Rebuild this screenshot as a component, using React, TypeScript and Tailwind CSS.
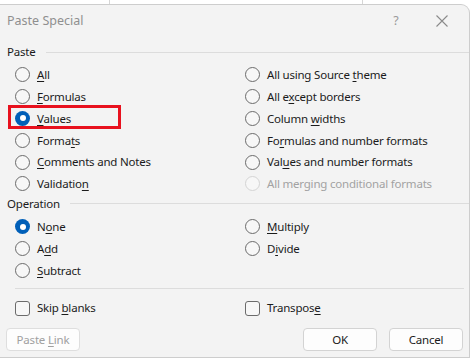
import React from "react";

type Opt = { label: string; key: number; checked?: boolean; disabled?: boolean };

// label with an access key underline at position `key`
function KeyLabel({ label, k }: { label: string; k: number }) {
    if (k < 0) return <span>{label}</span>;
    return (
        <span>
            {label.slice(0, k)}
            <span className="underline underline-offset-[2px] decoration-1">{label[k]}</span>
            {label.slice(k + 1)}
        </span>
    );
}

function Radio({ opt, boxed }: { opt: Opt; boxed?: boolean }) {
    return (
        <div className="relative flex items-center h-[21.8px] gap-[7px]">
            {opt.checked ? (
                <span className="w-[15px] h-[15px] rounded-full bg-[#005fb8] flex items-center justify-center shrink-0">
                    <span className="w-[6px] h-[6px] rounded-full bg-white" />
                </span>
            ) : (
                <span
                    className={`w-[15px] h-[15px] rounded-full border shrink-0 bg-[#f7f7f7] ${opt.disabled ? "border-[#d4d4d4]" : "border-[#6b6b6b]"}`}
                />
            )}
            <span className={opt.disabled ? "text-[#a2a2a2]" : "text-[#1b1b1b]"}>
                <KeyLabel label={opt.label} k={opt.key} />
            </span>
            {boxed && (
                <div className="absolute left-[-7px] top-[-3px] w-[113px] h-[24px] border-[3px] border-[#e8111e]" />
            )}
        </div>
    );
}

function Check({ label, k }: { label: string; k: number }) {
    return (
        <div className="flex items-center h-[21.8px] gap-[7px]">
            <span className="w-[15px] h-[15px] rounded-[3px] border border-[#6b6b6b] bg-[#f7f7f7] shrink-0" />
            <span className="text-[#1b1b1b]">
                <KeyLabel label={label} k={k} />
            </span>
        </div>
    );
}

function GroupLabel({ text }: { text: string }) {
    return (
        <div className="flex items-center h-[18px] pl-[7px] gap-[10px]">
            <span className="text-[#1b1b1b]">{text}</span>
            <div className="flex-1 h-px bg-[#dcdcdc]" />
        </div>
    );
}

const pasteLeft: Opt[] = [
    { label: "All", key: 0 },
    { label: "Formulas", key: 0 },
    { label: "Values", key: 0, checked: true },
    { label: "Formats", key: 5 },
    { label: "Comments and Notes", key: 0 },
    { label: "Validation", key: 9 },
];

const pasteRight: Opt[] = [
    { label: "All using Source theme", key: 17 },
    { label: "All except borders", key: 5 },
    { label: "Column widths", key: 7 },
    { label: "Formulas and number formats", key: 2 },
    { label: "Values and number formats", key: 3 },
    { label: "All merging conditional formats", key: -1, disabled: true },
];

const opLeft: Opt[] = [
    { label: "None", key: 1, checked: true },
    { label: "Add", key: 1 },
    { label: "Subtract", key: 0 },
];

const opRight: Opt[] = [
    { label: "Multiply", key: 0 },
    { label: "Divide", key: 1 },
];

export default function App() {
    return (
        <div
            className="w-[474px] h-[360px] bg-white overflow-hidden text-[11.5px] tracking-[-0.2px]"
            style={{ fontFamily: '"Noto Sans", "Open Sans", sans-serif' }}
        >
            {/* sheet grid peeking above */}
            <div className="h-[4px] flex">
                <div className="w-[110px] border-r border-[#d6d6d6]" />
                <div className="w-[253px] border-r border-[#d6d6d6]" />
            </div>
            <div className="w-[470px] h-[354px] bg-[#f3f3f3] border border-l-0 border-[#cdcdcd] rounded-tr-[9px] flex flex-col">
                {/* title bar */}
                <div className="h-[32px] flex items-center pl-[7px] text-[12.5px] tracking-normal text-[#8f8f8f]">
                    <span className="flex-1">Paste Special</span>
                    <span className="w-[20px] text-center mr-[29px] text-[#9a9a9a]">?</span>
                    <svg width="14" height="14" viewBox="0 0 14 14" className="mr-[20px]">
                        <path d="M1.5 1.5 L12.5 12.5 M12.5 1.5 L1.5 12.5" stroke="#8a8a8a" strokeWidth="1.1" fill="none" />
                    </svg>
                </div>

                <div className="mt-[6px]">
                    <GroupLabel text="Paste" />
                </div>
                <div className="mt-[3px] grid grid-cols-[230px_1fr] pl-[15px]">
                    <div>
                        {pasteLeft.map((o) => (
                            <Radio key={o.label} opt={o} boxed={o.label === "Values"} />
                        ))}
                    </div>
                    <div>
                        {pasteRight.map((o) => (
                            <Radio key={o.label} opt={o} />
                        ))}
                    </div>
                </div>

                <GroupLabel text="Operation" />
                <div className="mt-[3px] grid grid-cols-[230px_1fr] pl-[15px]">
                    <div>
                        {opLeft.map((o) => (
                            <Radio key={o.label} opt={o} />
                        ))}
                    </div>
                    <div>
                        {opRight.map((o) => (
                            <Radio key={o.label} opt={o} />
                        ))}
                    </div>
                </div>

                <div className="mt-[7px] ml-[15px] mr-[5px] h-px bg-[#dcdcdc]" />

                <div className="mt-[8px] grid grid-cols-[230px_1fr] pl-[15px]">
                    <Check label="Skip blanks" k={5} />
                    <Check label="Transpose" k={8} />
                </div>

                <div className="mt-[9px] flex items-center pl-[6px] pr-[6px]">
                    <button className="w-[74px] h-[23px] bg-[#fdfdfd] border border-[#dedede] rounded-[4px] text-[#a0a0a0]">
                        Paste <KeyLabel label="Link" k={0} />
                    </button>
                    <div className="flex-1" />
                    <button className="w-[74px] h-[23px] bg-[#fdfdfd] border border-[#d3d3d3] rounded-[4px] text-[#1b1b1b]">
                        OK
                    </button>
                    <button className="ml-[12px] w-[74px] h-[23px] bg-[#fdfdfd] border border-[#d3d3d3] rounded-[4px] text-[#1b1b1b]">
                        Cancel
                    </button>
                </div>
            </div>
        </div>
    );
}
